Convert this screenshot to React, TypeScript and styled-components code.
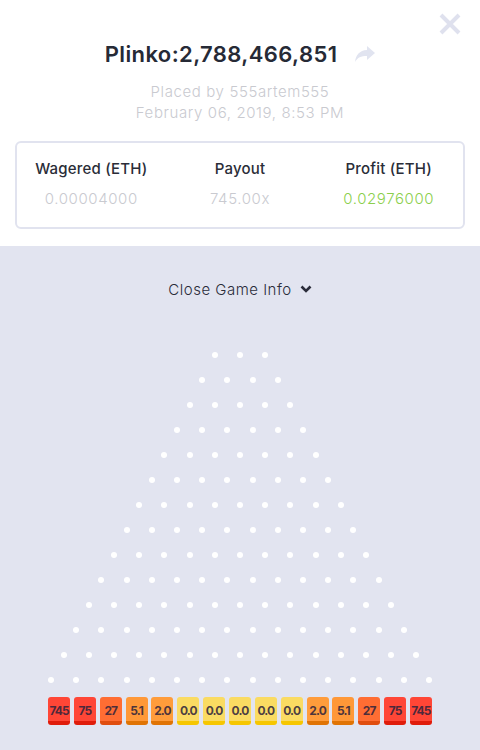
import React from "react";
import styled, {createGlobalStyle} from "styled-components";

const GlobalStyle = createGlobalStyle`
  html, body { margin: 0; padding: 0; }
  body { font-family: "Inter", "Liberation Sans", sans-serif; background: #e2e4f0; }
`

const Page = styled.div`
  width: 480px;
  height: 750px;
  display: flex;
  flex-direction: column;
  overflow: hidden;
`
const Header = styled.div`
  position: relative;
  background: white;
  padding: 36px 15px 17px;
  display: flex;
  flex-direction: column;
  align-items: center;
`
const CloseBtn = styled.div`
  position: absolute;
  top: 13px;
  right: 19px;
  width: 22px;
  height: 22px;
`
const TitleRow = styled.div`
  display: flex;
  align-items: center;
  gap: 18px;
  height: 36px;
`
const Title = styled.h1`
  margin: 0;
  font-size: 22px;
  font-weight: 600;
  color: #262a36;
  letter-spacing: 0.4px;
`
const Meta = styled.div`
  margin-top: 9px;
  font-size: 15px;
  line-height: 21px;
  color: #c9cad0;
  text-align: center;
  font-weight: 300;
  letter-spacing: 0.6px;
`
const Card = styled.div`
  margin-top: 18px;
  align-self: stretch;
  border: 2px solid #e1e3ef;
  border-radius: 6px;
  height: 84px;
  display: grid;
  grid-template-columns: repeat(3, 1fr);
`
const Stat = styled.div`
  display: flex;
  flex-direction: column;
  align-items: center;
  padding-top: 16px;
`
const Label = styled.div`
  font-size: 15px;
  font-weight: 500;
  color: #2a2d38;
  line-height: 20px;
  letter-spacing: 0.2px;
`
const Value = styled.div<{ $green?: boolean }>`
  margin-top: 10px;
  font-size: 15px;
  font-weight: 300;
  line-height: 20px;
  letter-spacing: 0.6px;
  color: ${p => p.$green ? "#8ccf4d" : "#c9cad0"};
`
const Board = styled.div`
  flex: 1;
  background: #e2e4f0;
  display: flex;
  flex-direction: column;
  align-items: center;
  padding-top: 33px;
`
const Toggle = styled.div`
  display: flex;
  align-items: center;
  gap: 8px;
  font-size: 15px;
  font-weight: 300;
  letter-spacing: 0.5px;
  color: #2a2c3a;
  height: 20px;
`
const Pegs = styled.div`
  margin-top: 53px;
  display: flex;
  flex-direction: column;
  align-items: center;
  gap: 19px;
`
const PegRow = styled.div`
  display: flex;
  gap: 19.2px;
`
const Peg = styled.span`
  width: 6px;
  height: 6px;
  border-radius: 50%;
  background: white;
`
const Buckets = styled.div`
  margin-top: 14px;
  display: flex;
  gap: 3.85px;
`
const Bucket = styled.div<{ $top: string; $bottom: string }>`
  width: 22px;
  height: 28px;
  box-sizing: border-box;
  border-radius: 3px;
  background: ${p => p.$top};
  border-bottom: 4px solid ${p => p.$bottom};
  display: flex;
  align-items: center;
  justify-content: center;
  padding-top: 3px;
  font-size: 12px;
  font-weight: 700;
  letter-spacing: -0.9px;
  white-space: nowrap;
  color: rgba(45, 35, 60, 0.85);
`

const colors: Record<string, [string, string]> = {
  "745": ["#ff4636", "#e01c0b"],
  "75": ["#ff4636", "#e01c0b"],
  "27": ["#ff6d33", "#e04d0f"],
  "5.1": ["#ff9838", "#e07304"],
  "2.0": ["#ff9c3b", "#e07304"],
  "0.0": ["#fadb62", "#f6c600"],
}
const payouts = ["745", "75", "27", "5.1", "2.0", "0.0", "0.0", "0.0", "0.0", "0.0", "2.0", "5.1", "27", "75", "745"]

function App() {
  const rows = Array.from({length: 14}, (_, i) => i + 3)
  return (
    <Page>
      <GlobalStyle/>
      <Header>
        <CloseBtn>
          <svg width="22" height="22" viewBox="0 0 22 22">
            <path d="M2 2 L20 20 M20 2 L2 20" stroke="#dfe1ee" strokeWidth="4" strokeLinecap="butt"/>
          </svg>
        </CloseBtn>
        <TitleRow>
          <Title>Plinko:2,788,466,851</Title>
          <svg width="20" height="16" viewBox="0 0 20 16">
            <path d="M12 0 L20 7 L12 14 L12 10 C6 10 2.5 11.5 0 16 C0.8 9 4.5 4.5 12 4 Z" fill="#e1e4f0"/>
          </svg>
        </TitleRow>
        <Meta>
          Placed by 555artem555<br/>
          February 06, 2019, 8:53 PM
        </Meta>
        <Card>
          <Stat>
            <Label>Wagered (ETH)</Label>
            <Value>0.00004000</Value>
          </Stat>
          <Stat>
            <Label>Payout</Label>
            <Value>745.00x</Value>
          </Stat>
          <Stat>
            <Label>Profit (ETH)</Label>
            <Value $green>0.02976000</Value>
          </Stat>
        </Card>
      </Header>
      <Board>
        <Toggle>
          Close Game Info
          <svg width="12" height="8" viewBox="0 0 12 8">
            <path d="M1.5 1.5 L6 6 L10.5 1.5" stroke="#2a2c3a" strokeWidth="2.6" fill="none"/>
          </svg>
        </Toggle>
        <Pegs>
          {rows.map(n =>
            <PegRow key={n}>
              {Array.from({length: n}, (_, j) => <Peg key={j}/>)}
            </PegRow>
          )}
        </Pegs>
        <Buckets>
          {payouts.map((p, i) =>
            <Bucket key={i} $top={colors[p][0]} $bottom={colors[p][1]}>{p}</Bucket>
          )}
        </Buckets>
      </Board>
    </Page>
  );
}
export default App;
